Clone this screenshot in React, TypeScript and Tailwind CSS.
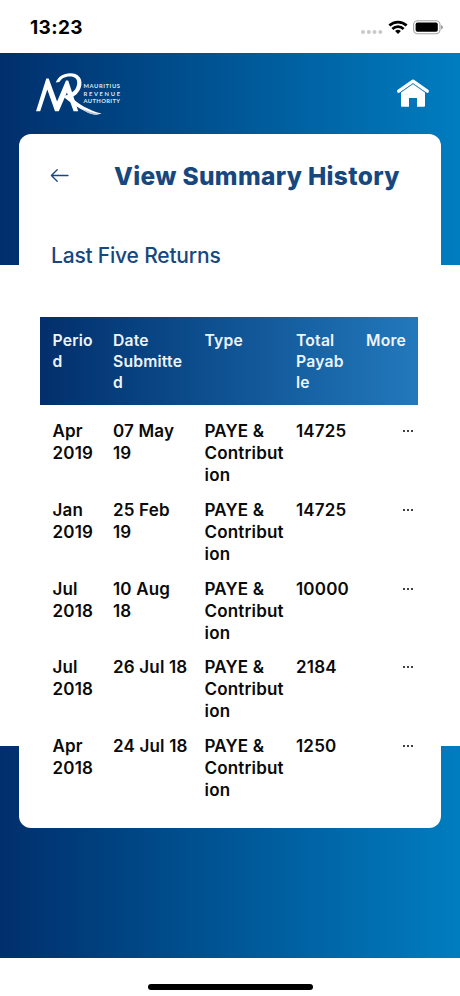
type SummaryReturn = {
  period: string[];
  submitted: string[];
  total: string;
};

const RETURNS: SummaryReturn[] = [
  { period: ["Apr", "2019"], submitted: ["07 May", "19"], total: "14725" },
  { period: ["Jan", "2019"], submitted: ["25 Feb", "19"], total: "14725" },
  { period: ["Jul", "2018"], submitted: ["10 Aug", "18"], total: "10000" },
  { period: ["Jul", "2018"], submitted: ["26 Jul 18"], total: "2184" },
  { period: ["Apr", "2018"], submitted: ["24 Jul 18"], total: "1250" },
];

const RETURN_TYPE = ["PAYE &", "Contribut", "ion"];

function Lines({ lines }: { lines: string[] }) {
  return (
    <div className="whitespace-nowrap">
      {lines.map((line) => (
        <span key={line} className="block">
          {line}
        </span>
      ))}
    </div>
  );
}

function StatusBar() {
  return (
    <div className="flex h-[53px] items-center justify-between bg-white pl-[30px] pr-[17px] pt-[3px]">
      <span className="text-[19px] font-bold tracking-[0.4px] text-black">
        13:23
      </span>
      <svg width="83" height="18" viewBox="0 0 83 18">
        <g fill="#c9c9cb">
          <circle cx="3" cy="13" r="2" />
          <circle cx="8.8" cy="13" r="2" />
          <circle cx="14.5" cy="13" r="2" />
          <circle cx="20.3" cy="13" r="2" />
        </g>
        <g fill="none" stroke="#000" strokeWidth="2.7">
          <path d="M29.4 6.5a12.4 12.4 0 0 1 17.2 0" />
          <path d="M32.4 10a7.9 7.9 0 0 1 11.2 0" />
        </g>
        <path d="M38 15l-2.9-2.9a4.2 4.2 0 0 1 5.8 0z" fill="#000" />
        <rect
          x="53.6"
          y="1.7"
          width="26.4"
          height="13"
          rx="3.9"
          fill="none"
          stroke="#a5a5a5"
          strokeWidth="1.1"
        />
        <rect x="55.6" y="3.6" width="22.2" height="9.2" rx="1.8" fill="#000" />
        <path d="M81.2 6.1c2.2.8 2.2 3.5 0 4.3z" fill="#8f8f8f" />
      </svg>
    </div>
  );
}

function Logo() {
  return (
    <svg width="90" height="46" viewBox="0 0 90 46" aria-label="Mauritius Revenue Authority">
      <path
        d="M0 39.2L10.3 6.4h2.4l8.4 23L30 8.6h2.2L42.2 39.2h-4.6L30.9 20.6 22.8 39.2h-3.8L11.3 17.4 4.2 39.2z"
        fill="#fff"
      />
      <path
        d="M19.8 10.4C22 4.8 27 1.2 34.4 1.2 42 1.3 46 5.8 45.4 12.2 44.8 18.8 40.3 23.4 35.4 25.4 42.5 32.2 52 37.6 65.5 41.6 61 43.4 56.4 42.8 51 40.2 42.6 36.2 34.5 30.8 26.8 24.2 35 22.6 40.6 18.6 41.2 11.6 41.6 6.8 38.6 4.3 33.8 4.4 28.4 4.4 25 6.8 23.4 10z"
        fill="#fff"
      />
      <path d="M43 34.6c7 4.6 13.6 6.4 20.4 7.2-4.4 1.2-8 .6-12.4-1.6z" fill="#b9c3d2" />
      <g
        fill="#dfe8f2"
        fontFamily="Lato, sans-serif"
        fontSize="5.8"
        fontWeight="700"
      >
        <text x="47.5" y="16" textLength="36.5">MAURITIUS</text>
        <text x="47.5" y="23.6" textLength="36.5">REVENUE</text>
        <text x="47.5" y="31.2" textLength="36.5">AUTHORITY</text>
      </g>
    </svg>
  );
}

function HomeIcon() {
  return (
    <svg width="34" height="30" viewBox="0 0 34 30" fill="#fff">
      <path
        d="M2.7 13.2L17 3.2l14.3 10"
        fill="none"
        stroke="#fff"
        strokeWidth="3.3"
        strokeLinecap="round"
        strokeLinejoin="round"
      />
      <path d="M17 5.7l12 8.6V27.7q0 1-1 1h-7V20h-8v8.7H6q-1 0-1-1V14.3z" />
      <path
        d="M4.4 14.6L17 5.8l12.6 8.8"
        fill="none"
        stroke="#0873b5"
        strokeWidth=".6"
      />
    </svg>
  );
}

function BackArrow() {
  return (
    <svg
      width="20"
      height="16"
      viewBox="0 0 20 16"
      fill="none"
      stroke="#17477f"
      strokeWidth="1.3"
      strokeLinecap="round"
      strokeLinejoin="round"
    >
      <path d="M18 7.5H1.8M7.2 1.7L1.4 7.5l5.8 5.8" />
    </svg>
  );
}

function SummaryTable() {
  return (
    <section className="ml-[21px] mr-[23px]">
      <div className="grid h-[87.5px] grid-cols-[60.5px_91.5px_91.5px_70px_1fr] bg-linear-to-r from-[#032f6c] to-[#2279bc] pl-[12.5px] pt-[13px] text-[15.7px] font-semibold leading-[21px] tracking-[0.2px] text-[#eef4fb]">
        <Lines lines={["Perio", "d"]} />
        <Lines lines={["Date", "Submitte", "d"]} />
        <Lines lines={["Type"]} />
        <Lines lines={["Total", "Payab", "le"]} />
        <Lines lines={["More"]} />
      </div>
      <div className="flex flex-col gap-[12.75px] pt-[15.5px] text-[17px] font-semibold leading-[22px] tracking-[0.18px] text-[#0a0a0a]">
        {RETURNS.map((item, index) => (
          <div
            key={index}
            className="grid grid-cols-[60.5px_91.5px_91.5px_70px_1fr] pl-[12.5px]"
          >
            <Lines lines={item.period} />
            <Lines lines={item.submitted} />
            <Lines lines={RETURN_TYPE} />
            <Lines lines={[item.total]} />
            <div className="flex h-[22px] items-center justify-end gap-[2.2px] pr-[5px]">
              <i className="size-[2px] rounded-full bg-black" />
              <i className="size-[2px] rounded-full bg-black" />
              <i className="size-[2px] rounded-full bg-black" />
            </div>
          </div>
        ))}
      </div>
    </section>
  );
}

export default function App() {
  return (
    <div className="flex h-[996px] w-[460px] flex-col overflow-hidden bg-white font-['Inter',sans-serif]">
      <StatusBar />
      <main className="h-[905px] shrink-0 bg-[linear-gradient(to_bottom,transparent_212px,white_212px,white_693px,transparent_693px),linear-gradient(to_right,#002f6c,#007dc0)]">
        <header className="flex h-[80.5px] items-start justify-between pl-[36px] pr-[30px]">
          <div className="pt-[19px]">
            <Logo />
          </div>
          <div className="pt-[25px]">
            <HomeIcon />
          </div>
        </header>
        <div className="mx-[19px] h-[694.5px] rounded-[12px] bg-white">
          <div className="flex h-[84px] items-center pl-[31px]">
            <BackArrow />
            <h1 className="ml-[44px] whitespace-nowrap text-[24.5px] font-[850] leading-[30px] tracking-[0.34px] text-[#17477f]">
              View Summary History
            </h1>
          </div>
          <h2 className="h-[99.5px] pl-[32px] pt-[24px] text-[21px] font-medium leading-[28px] tracking-[-0.2px] text-[#17477f]">
            Last Five Returns
          </h2>
          <SummaryTable />
        </div>
      </main>
      <footer className="flex flex-1 justify-center pt-[25.5px]">
        <div className="h-[6px] w-[165px] rounded-full bg-black" />
      </footer>
    </div>
  );
}
